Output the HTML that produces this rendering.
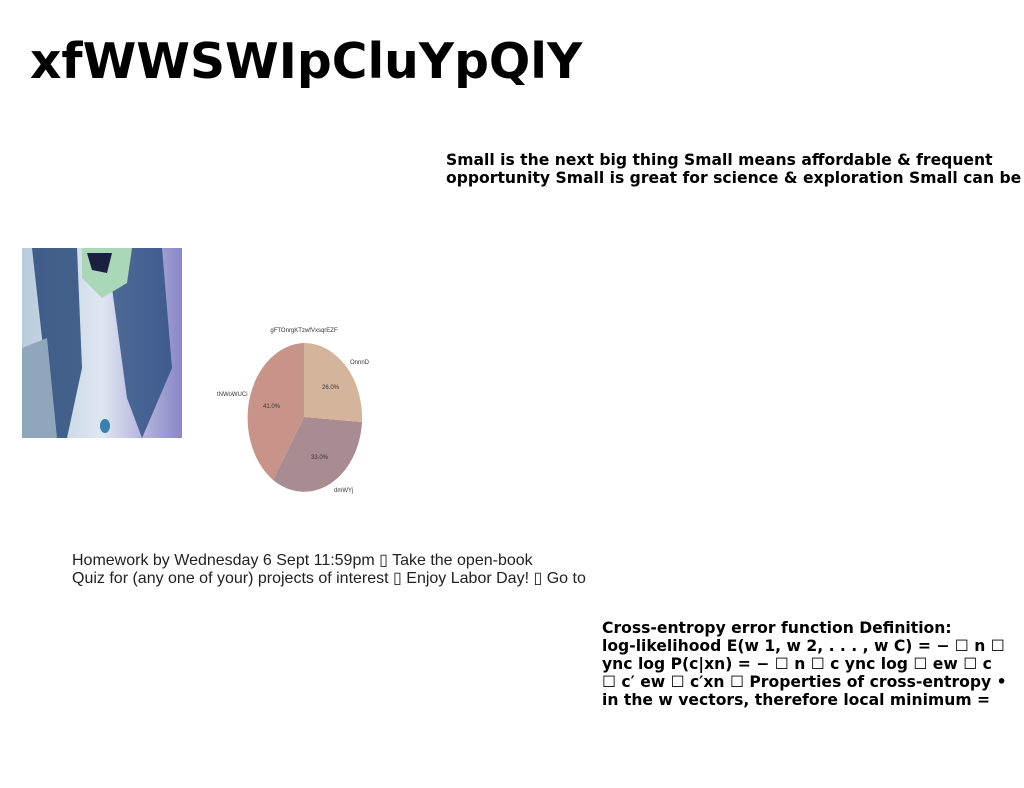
<!DOCTYPE html>
<html><head><style>
body{margin:0;width:1024px;height:788px;background:#fff;position:relative;overflow:hidden;font-family:"DejaVu Sans",Verdana,sans-serif;color:#000}
.a{position:absolute;white-space:nowrap}
h1{position:absolute;left:30px;top:32px;margin:0;font-size:48.7px;font-weight:bold;line-height:60px}
.b{font-weight:bold;font-size:15.6px;line-height:18px}
.h{font-family:"Liberation Sans",sans-serif;font-size:16px;line-height:18px;color:#222}
</style></head><body>
<h1>xfWWSWIpCluYpQlY</h1>
<div class="a b" style="left:446px;top:151px">Small is the next big thing Small means affordable &amp; frequent<br>opportunity Small is great for science &amp; exploration Small can be</div>
<svg class="a" style="left:22px;top:248px" width="160" height="190">
<defs><linearGradient id="g" x1="0" y1="0" x2="1" y2="0"><stop offset="0" stop-color="#b8cbdc"/><stop offset=".5" stop-color="#dfe6f2"/><stop offset="1" stop-color="#8a86c8"/></linearGradient></defs>
<rect width="160" height="190" fill="url(#g)"/>
<path d="M10 0 L55 0 L60 120 L45 190 L30 190 L20 90 Z" fill="#2a4a7a" opacity=".85"/>
<path d="M100 0 L140 0 L150 120 L120 190 L105 150 L90 40 Z" fill="#2b4d80" opacity=".8"/>
<path d="M60 0 L110 0 L105 35 L80 50 L60 30 Z" fill="#a9d7b8"/>
<path d="M65 5 L90 5 L85 25 L70 22 Z" fill="#1a2040"/>
<path d="M0 100 L25 90 L35 190 L0 190 Z" fill="#8fa6bc"/>
<ellipse cx="83" cy="178" rx="5" ry="7" fill="#3b7fb0"/>
</svg>
<svg class="a" style="left:200px;top:320px" width="180" height="180" font-family="Liberation Sans,sans-serif" font-size="6" fill="#333">
<text x="104" y="12" text-anchor="middle">gFTOnrgKTzwfVxsqrEZF</text>
<path d="M104 97 L104 23 A58 75 0 0 0 73 160 Z" fill="#c8948a"/>
<path d="M104 97 L73 160 A58 75 0 0 0 162 102 Z" fill="#a98b92"/>
<path d="M104 97 L162 102 A58 75 0 0 0 104 23 Z" fill="#d4b49b"/>
<text x="150" y="44">OnnnD</text>
<text x="122" y="69">26.0%</text>
<text x="17" y="76">tNWoWUCi</text>
<text x="63" y="88">41.0%</text>
<text x="111" y="139">33.0%</text>
<text x="134" y="172">dmWYj</text>
</svg>
<div class="a h" style="left:72px;top:552px">Homework by Wednesday 6 Sept 11:59pm ▯ Take the open-book<br>Quiz for (any one of your) projects of interest ▯ Enjoy Labor Day! ▯ Go to</div>
<div class="a b" style="left:602px;top:619px">Cross-entropy error function Definition:<br>log-likelihood E(w 1, w 2, . . . , w C) = − ☐ n ☐<br>ync log P(c|xn) = − ☐ n ☐ c ync log ☐ ew ☐ c<br>☐ c′ ew ☐ c′xn ☐ Properties of cross-entropy •<br>in the w vectors, therefore local minimum =</div>
</body></html>
